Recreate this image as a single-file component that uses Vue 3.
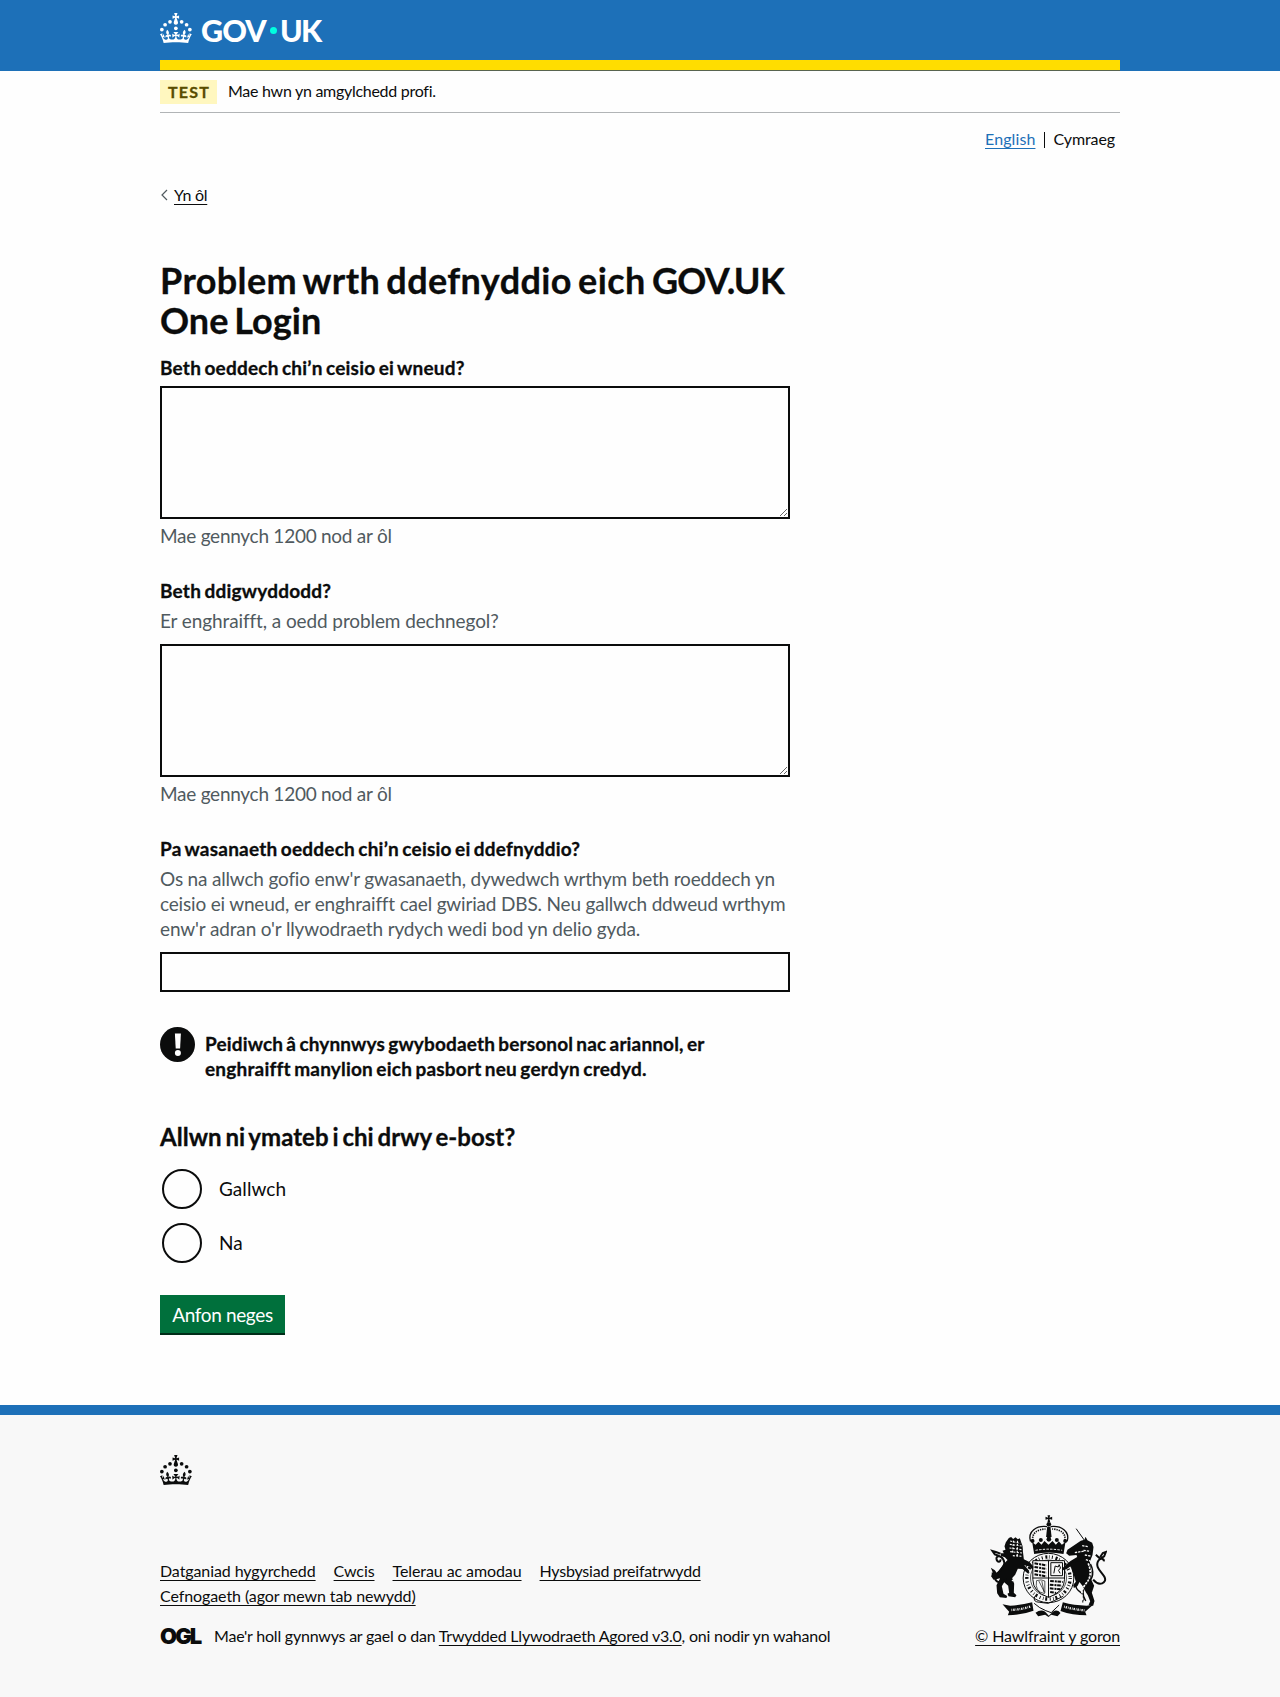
<script setup>
import { ref } from 'vue'

const goal = ref('')
const happened = ref('')
const service = ref('')
const contact = ref('')

const crownDots = [
  [20, 17.6], [10.2, 23.5], [3.7, 33.2], [31.7, 30.6],
  [43.3, 17.6], [53.2, 23.5], [59.7, 33.2],
]
const crownPath = 'M33.1,9.8c.2-.1.3-.3.5-.5l4.6,2.4v-6.8l-4.6,1.5c-.1-.2-.3-.3-.5-.5l1.9-5.9h-6.7l1.9,5.9c-.2.1-.3.3-.5.5l-4.6-1.5v6.8l4.6-2.4c.1.2.3.3.5.5l-2.6,8c-.9,2.8,1.2,5.7,4.1,5.7h0c3,0,5.1-2.9,4.1-5.7l-2.6-8ZM37,37.9s-3.4,3.8-4.1,6.1c2.2,0,4.2-.5,6.4-2.8l-.7,8.5c-2-2.8-4.4-4.1-5.7-3.8.1,3.1.5,6.7,5.8,7.2,3.7.3,6.7-1.5,7-3.8.4-2.6-2-4.3-3.7-1.6-1.4-4.5,2.4-6.1,4.9-3.2-1.9-4.5-1.8-7.7,2.4-10.9,3,4,2.6,7.3-1.2,11.1,2.4-1.3,6.2,0,4,4.6-1.2-2.8-3.7-2.2-4.2.2-.3,1.7.7,3.7,3,4.2,1.9.3,4.7-.9,7-5.9-1.3,0-2.4.7-3.9,1.7l2.4-8c.6,2.3,1.4,3.7,2.2,4.5.6-1.6.5-2.8,0-5.3l5,1.8c-2.6,3.6-5.2,8.7-7.3,17.5-7.4-1.1-15.7-1.7-24.5-1.7h0c-8.8,0-17.1.6-24.5,1.7-2.1-8.9-4.7-13.9-7.3-17.5l5-1.8c-.5,2.5-.6,3.7,0,5.3.8-.8,1.6-2.3,2.2-4.5l2.4,8c-1.5-1-2.6-1.7-3.9-1.7,2.3,5,5.2,6.2,7,5.9,2.3-.4,3.3-2.4,3-4.2-.5-2.4-3-3.1-4.2-.2-2.2-4.6,1.6-6,4-4.6-3.7-3.7-4.2-7.1-1.2-11.1,4.2,3.2,4.3,6.4,2.4,10.9,2.5-2.8,6.3-1.3,4.9,3.2-1.8-2.7-4.1-1-3.7,1.6.3,2.3,3.3,4.1,7,3.8,5.4-.5,5.7-4.2,5.8-7.2-1.3-.2-3.7,1-5.7,3.8l-.7-8.5c2.2,2.3,4.2,2.7,6.4,2.8-.7-2.3-4.1-6.1-4.1-6.1h10.6,0Z'
</script>

<template>
  <div class="page">
    <header class="header">
      <div class="container header-inner">
        <a class="brand">
          <svg class="crown" viewBox="0 0 64 60" width="32" height="30" fill="#fff">
            <circle v-for="(d, i) in crownDots" :key="i" :cx="d[0]" :cy="d[1]" r="3.7" />
            <path :d="crownPath" />
          </svg>
          <span class="brand-gov">GOV</span><i class="brand-dot"></i><span class="brand-uk">UK</span>
        </a>
      </div>
    </header>

    <div class="container">
      <div class="phase">
        <strong class="tag">TEST</strong>
        <span class="phase-text">Mae hwn yn amgylchedd profi.</span>
      </div>
      <nav class="langs">
        <a class="link-blue">English</a>
        <span class="lang-current">Cymraeg</span>
      </nav>
      <div class="back">
        <svg width="8" height="12" viewBox="0 0 8 12"><path d="M7 1 2 6l5 5" fill="none" stroke="#505a5f" stroke-width="1.2" /></svg>
        <a class="link">Yn ôl</a>
      </div>

      <main class="main">
        <h1><span class="h1-a">Problem wrth ddefnyddio eich <b class="h1-name">GOV.UK</b></span> <span class="h1-b">One Login</span></h1>

        <div class="group">
          <label class="label">Beth oeddech chi’n ceisio ei wneud?</label>
          <textarea v-model="goal" class="field area first"></textarea>
          <div class="hint count">Mae gennych 1200 nod ar ôl</div>
        </div>

        <div class="group">
          <label class="label">Beth ddigwyddodd?</label>
          <div class="hint narrow">Er enghraifft, a oedd problem dechnegol?</div>
          <textarea v-model="happened" class="field area"></textarea>
          <div class="hint count">Mae gennych 1200 nod ar ôl</div>
        </div>

        <div class="group">
          <label class="label">Pa wasanaeth oeddech chi’n ceisio ei ddefnyddio?</label>
          <div class="hint body">
            <span class="line">Os na allwch gofio enw'r gwasanaeth, dywedwch wrthym beth roeddech yn</span>
            <span class="line">ceisio ei wneud, er enghraifft cael gwiriad DBS. Neu gallwch ddweud wrthym</span>
            <span class="line last">enw'r adran o'r llywodraeth rydych wedi bod yn delio gyda.</span>
          </div>
          <input v-model="service" class="field input" type="text" />
        </div>

        <div class="warning">
          <svg width="35" height="35" viewBox="0 0 35 35">
            <circle cx="17.5" cy="17.5" r="17.5" fill="#0b0c0c" />
            <path d="M14.9 6.6h6l-.8 15h-4.4z" fill="#fff" /><circle cx="17.9" cy="26" r="3" fill="#fff" />
          </svg>
          <strong class="warning-text">
            <span class="line">Peidiwch â chynnwys gwybodaeth bersonol nac ariannol, er</span>
            <span class="line last">enghraifft manylion eich pasbort neu gerdyn credyd.</span>
          </strong>
        </div>

        <h2>Allwn ni ymateb i chi drwy e-bost?</h2>
        <div class="radios">
          <label class="radio"><input v-model="contact" type="radio" name="contact" value="yes" /><span>Gallwch</span></label>
          <label class="radio"><input v-model="contact" type="radio" name="contact" value="no" /><span>Na</span></label>
        </div>

        <button class="button" type="button">Anfon neges</button>
      </main>
    </div>

    <footer class="footer">
      <div class="container">
        <svg class="footer-crown" viewBox="0 0 64 60" width="32" height="30" fill="#0b0c0c">
          <circle v-for="(d, i) in crownDots" :key="i" :cx="d[0]" :cy="d[1]" r="3.7" />
          <path :d="crownPath" />
        </svg>
        <div class="footer-row">
          <div>
            <ul class="links">
              <li><a class="link">Datganiad hygyrchedd</a></li>
              <li><a class="link">Cwcis</a></li>
              <li><a class="link">Telerau ac amodau</a></li>
              <li><a class="link wide">Hysbysiad preifatrwydd</a></li>
              <li><a class="link">Cefnogaeth (agor mewn tab newydd)</a></li>
            </ul>
            <div class="licence">
              <span class="ogl">OGL</span>
              <span class="licence-text">Mae'r holl gynnwys ar gael o dan <a class="link">Trwydded Llywodraeth Agored v3.0</a>, oni nodir yn wahanol</span>
            </div>
          </div>
          <div class="copyright">
            <svg class="crest" viewBox="90 40 350 312" width="117" height="104" fill="#0b0c0c" stroke="#0b0c0c">
              <!-- crown -->
              <g stroke="none">
                <path d="M262 44h8l-2 7 8-3v9l-8-2 2 9h-8l2-9-8 2v-9l8 3z" />
                <circle cx="266" cy="71" r="7" />
                <path d="M216 124l10 8 9-9 9 9 9-11 12 11 12-11 10 11 9-10 9 10 11-8-6 36q-44-9-88 0z" />
                <circle cx="217" cy="121" r="6" /><circle cx="242" cy="118" r="6" /><circle cx="266" cy="116" r="7" /><circle cx="290" cy="118" r="6" /><circle cx="315" cy="121" r="6" />
                <path d="M261 79h10l3 28-8 10-8-10z" />
              </g>
              <path d="M211 122c-9-30 18-48 50-44M321 122c9-30-18-48-50-44" fill="none" stroke-width="4" />
              <path d="M218 119c-4-20 12-33 38-34M314 119c4-20-12-33-38-34" fill="none" stroke-width="5" stroke-dasharray="4 3" />
              <path d="M226 149q40-7 80 0" fill="none" stroke="#f8f8f8" stroke-width="3" stroke-dasharray="7 4" />
              <!-- garter and shield -->
              <ellipse cx="265" cy="232" rx="76" ry="74" fill="#f8f8f8" stroke-width="3" />
              <ellipse cx="265" cy="232" rx="65" ry="63" fill="none" stroke-width="10" stroke-dasharray="3 8 6 5 2 7" />
              <ellipse cx="265" cy="232" rx="54" ry="54" fill="none" stroke-width="2" />
              <path d="M218 180h95v56q0 38-48 54-47-16-47-54z" fill="#f8f8f8" stroke-width="3" />
              <path d="M265 180v110M218 232h95" fill="none" stroke-width="3" />
              <path d="M223 188l36 6M223 199l36 6M223 210l36 6M223 221l36 6M270 241l38 3M269 252l37 3M269 263l32 3M270 274l18 3" fill="none" stroke-width="6" stroke-dasharray="11 3 6 2" />
              <path d="M272 186h35v39h-35zM281 218l4-22 9 3 3-7 4 10-6 7 5 9" fill="none" stroke-width="3" />
              <path d="M229 240q-6 34 25 39M236 241l17 34M245 241l7 34M254 241v36M229 240q15-5 25 1" fill="none" stroke-width="2" />
              <!-- lion -->
              <g stroke="none">
                <path d="M146 112l7-3 6 6 7-5 7 6 6-3 4 12q6 12 5 25l3 26 17 8 12 14-2 9-12-10-14-3 15 16-2 10-18-15-14-1-8 18-9 10 6 17-1 27 8 8-4 6-20-3-3-8 5-3-3-21-12-10-7 12 5 22 11 7-2 6-20-2-8-12-2-24 11-21-20 4-6-9 1-13 11 4 10-8 14-20 12-13-8-8-11-4-2-8 10 0-4-8 9-3-3-10 4-12z" />
                <path d="M104 209l-12-8 6 15-5 12 13-1 3 10 7-12z" />
              </g>
              <path d="M139 236c-24 18-42 2-31-13 10-15 33-27 21-47-8-15-22-10-20-1 2 11 13 10 12 1M121 159l-14-5-10-3 7 10 14 5" fill="none" stroke-width="6" />
              <path d="M150 121l30 7M149 131l36 5M148 142l37 5M150 153l37 4M158 165l28 2M155 239l18 6M160 120l-3 38M172 120l-1 46" fill="none" stroke="#f8f8f8" stroke-width="3.5" stroke-dasharray="6 4" />
              <!-- unicorn -->
              <path d="M348 84l27 38" fill="none" stroke-width="3" />
              <g stroke="none">
                <path d="M362 120l11-3 3-9 6 11 14 7 4 13-3 24-8 20 4 19-6 18-13-1-9-14-15-7-18-2-13 10-10 3-1-8 13-12 10-8 20-12-2-6-22 2-9-7 4-11z" />
                <path d="M329 188l28-6 24 10 13 20-2 22 10 21-7 21 8 25-4 14-14-1 5-12-7-18-6-9-8-17-11-14-6 12-11 6-2-9 8-10-7-23z" />
              </g>
              <path d="M344 156l29-5M366 135l18 3M370 149l20 3M374 163l17 3M377 177l13 4" fill="none" stroke="#f8f8f8" stroke-width="4" stroke-dasharray="7 3" />
              <path d="M399 237c18 22 43 10 34-8-8-16-28-27-20-46 7-14 19-9 18-1M420 169l8-12 9-3-5 13-12 7-13-12" fill="none" stroke-width="6" />
              <path d="M391 190q17 34-8 58t-6 53M351 245q-9 13 4 25 23 15 12 35" fill="none" stroke-width="4" />
              <path d="M384 188q15 35-6 60t-8 54" fill="none" stroke="#f8f8f8" stroke-width="5" stroke-dasharray="7 3" />
              <!-- motto scroll -->
              <path d="M127 311l23 4q34-2 66-10l4 25q-35 13-77 14l4-11zM399 312l-20 3q-37 0-71-10l-7 26q36 13 78 13l-4-11z" stroke="none" />
              <path d="M154 328q33-2 58-11M312 318q29 9 63 11" fill="none" stroke="#f8f8f8" stroke-width="7" stroke-dasharray="2 3 4 3" />
              <path d="M224 287q-8 17 15 18l25 3 20-9 25-12M222 308q16 15 35 22l16 6 24-23" fill="none" stroke-width="3" />
              <path d="M226 336q16-11 29-3l11 12 12-12q13-8 23 4l-9 10-19-5-8 7-10-7-21 5z" stroke="none" />
            </svg>
            <a class="link">© Hawlfraint y goron</a>
          </div>
        </div>
      </div>
    </footer>
  </div>
</template>

<style>
body { background: #fefefe; }
</style>

<style scoped>
.page { font: 16px/20px Lato, "Liberation Sans", sans-serif; color: #0b0c0c; background: #fefefe; min-height: 1697px; display: flex; flex-direction: column; }
.container { width: 960px; margin: 0 auto; }
h1, h2, ul { margin: 0; padding: 0; }
h1, h2, .label, .warning-text { -webkit-text-stroke: .3px currentColor; }

.header { background: #1d70b8; height: 71px; }
.header-inner { height: 71px; box-sizing: border-box; border-bottom: 1px solid #58644f; display: flex; flex-direction: column; justify-content: space-between; }
.header-inner::after { content: ""; height: 10px; background: #ffdd00; }
.brand { display: flex; align-items: center; padding-top: 13px; height: 30px; color: #fff; font-size: 30.5px; line-height: 37px; font-weight: 900; }
.crown { flex: none; }
.brand span { padding-top: 5px; }
.brand-gov { margin-left: 9px; width: 67px; letter-spacing: -.9px; }
.brand-dot { width: 7px; height: 7px; margin: 5px 3px 0 2px; border-radius: 50%; background: #00ffe0; }
.brand-uk { letter-spacing: -1.8px; }

.phase { display: flex; align-items: center; height: 41px; border-bottom: 1px solid #b1b4b6; }
.tag { background: #fff7bf; color: #594d00; width: 57px; height: 24px; line-height: 23px; text-align: center; letter-spacing: 1.2px; margin-right: 11px; box-sizing: border-box; padding-left: 1px; -webkit-text-stroke: .3px currentColor; }
.phase-text { letter-spacing: -.28px; padding-bottom: 2px; }

.langs { display: flex; justify-content: flex-end; margin-top: 16px; padding-right: 5px; }
.lang-current { margin-left: 9px; padding-left: 9px; position: relative; letter-spacing: -.1px; }
.lang-current::before { content: ""; position: absolute; left: 0; top: 3px; width: 1px; height: 16px; background: #0b0c0c; }
.link, .link-blue { text-decoration: underline; text-decoration-thickness: 1px; text-underline-offset: 3px; text-decoration-skip-ink: none; }
.link-blue { color: #1d70b8; letter-spacing: .1px; }

.back { display: flex; align-items: center; margin-top: 36px; letter-spacing: -.25px; }
.back svg { margin-right: 6px; }

.main { width: 630px; padding-top: 55px; }
h1 { font-size: 36px; line-height: 40px; font-weight: 700; height: 80px; margin-bottom: 15px; white-space: nowrap; word-spacing: -3px; }
h1 span { display: block; }
.h1-a { letter-spacing: .4px; }
.h1-name { font-weight: 700; letter-spacing: -.7px; }
.h1-b { letter-spacing: .05px; }

.group { margin-bottom: 30px; }
.label { display: block; font-size: 19px; line-height: 25px; font-weight: 700; word-spacing: -1.5px; letter-spacing: .22px; }
.hint { font-size: 19px; line-height: 25px; color: #505a5f; margin: 5px 0 11px; letter-spacing: -.18px; }
.hint.narrow { letter-spacing: -.1px; }
.hint.count { margin: 4px 0 0; letter-spacing: -.26px; }
.line { display: block; white-space: nowrap; }
.hint .last { letter-spacing: -.14px; }
.field { display: block; width: 630px; box-sizing: border-box; border: 2px solid #0b0c0c; border-radius: 0; background: #fefefe; padding: 5px; font: 19px/25px Lato, sans-serif; outline: none; margin: 0; }
.area { height: 133px; resize: vertical; }
.area.first { margin-top: 6px; }
.input { height: 40px; }

.warning { display: flex; margin-top: 35px; }
.warning-text { padding: 4px 0 0 10px; font-size: 19px; line-height: 25px; word-spacing: -1.5px; letter-spacing: .15px; }
.warning-text .last { letter-spacing: .21px; }

h2 { font-size: 24px; line-height: 30px; font-weight: 700; word-spacing: -2px; letter-spacing: .03px; margin-top: 41px; }
.radios { margin-top: 17px; padding-left: 2px; }
.radio { display: flex; align-items: center; font-size: 19px; line-height: 25px; height: 40px; margin-bottom: 14px; }
.radio span { padding-bottom: 2px; letter-spacing: .05px; }
.radio input { appearance: none; width: 40px; height: 40px; margin: 0 17px 0 0; border: 2px solid #0b0c0c; border-radius: 50%; box-sizing: border-box; }
.button { display: block; margin: 32px 0 0; border: 0; border-radius: 0; width: 125px; height: 38px; padding: 0; background: #00703c; color: #fff; box-shadow: 0 2px 0 #002d18; font: 19px/25px Lato, sans-serif; letter-spacing: -.36px; }

.footer { margin-top: 72px; flex: 1; border-top: 10px solid #1d70b8; background: #f8f8f8; padding-top: 40px; }
.footer-crown { display: block; }
.footer-row { display: flex; justify-content: space-between; align-items: flex-end; margin-top: 29px; }
.links { list-style: none; display: flex; flex-wrap: wrap; width: 600px; column-gap: 18px; line-height: 25px; letter-spacing: -.09px; }
.links .wide { letter-spacing: -.22px; }
.licence { display: flex; margin-top: 18px; height: 20px; }
.ogl { width: 54px; font: 900 22px/20px Inter, sans-serif; letter-spacing: -1.9px; }
.licence-text { letter-spacing: -.22px; white-space: nowrap; }
.copyright { display: flex; flex-direction: column; align-items: flex-end; letter-spacing: -.14px; }
.crest { margin: 0 13px 8px 0; }
</style>
